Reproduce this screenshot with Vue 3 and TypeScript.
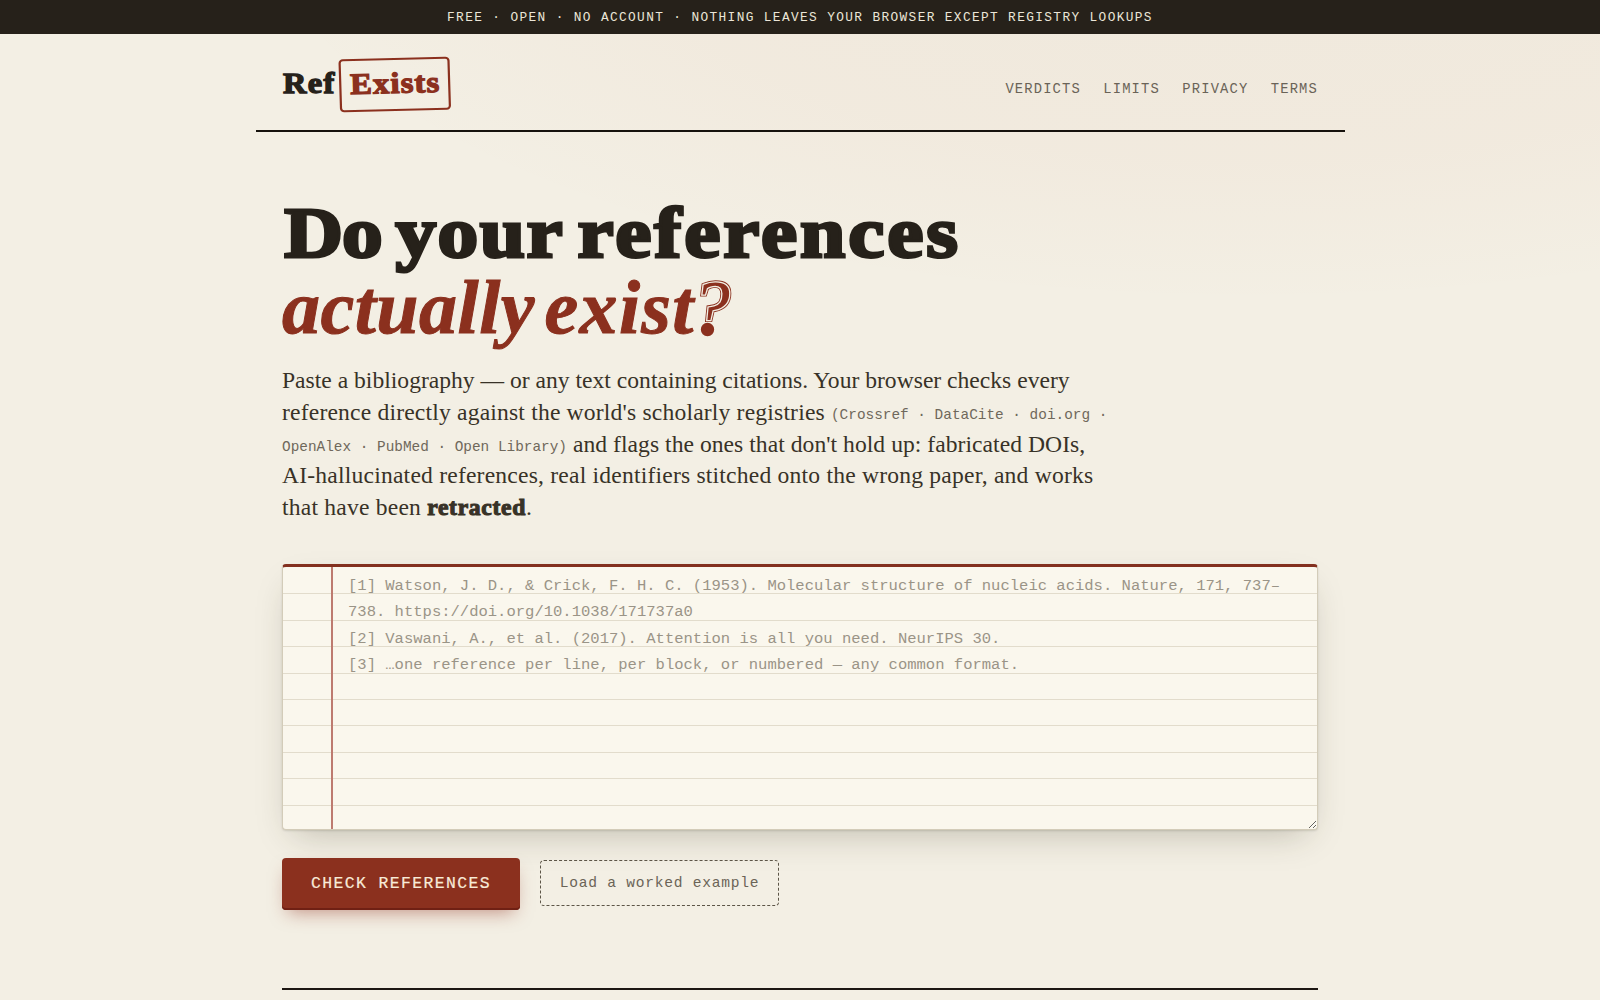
<script setup lang="ts">
import { ref } from 'vue'

interface NavLink {
  label: string
  href: string
}

const links: NavLink[] = [
  { label: 'Verdicts', href: '#verdicts' },
  { label: 'Limits', href: '#limits' },
  { label: 'Privacy', href: '#privacy' },
  { label: 'Terms', href: '#terms' },
]

const example = [
  '[1] Watson, J. D., & Crick, F. H. C. (1953). Molecular structure of nucleic acids. Nature, 171, 737–738. https://doi.org/10.1038/171737a0',
  '[2] Vaswani, A., et al. (2017). Attention is all you need. NeurIPS 30.',
  '[3] …one reference per line, per block, or numbered — any common format.',
].join('\n')

const bibliography = ref('')

function loadExample(): void {
  bibliography.value = example
}
</script>

<template>
  <div class="page">
    <div class="banner">Free · Open · No account · Nothing leaves your browser except registry lookups</div>

    <header class="masthead">
      <a class="logo" href="#"><span class="logo-ref">Ref</span><span class="stamp">Exists</span></a>
      <nav class="nav">
        <a v-for="link in links" :key="link.href" :href="link.href">{{ link.label }}</a>
      </nav>
    </header>

    <main class="main">
      <h1 class="title">
        <span class="title-line"><span class="w-do">Do</span> <span class="w-your">your</span> <span class="w-refs">references</span></span>
        <em class="title-em">actually <span class="w-exist">exist</span><span class="mark">?</span></em>
      </h1>

      <p class="lede">
        <span class="row r1">Paste a bibliography — or any text containing citations. Your browser checks every</span>
        <span class="row r2">reference directly against the world's scholarly registries <small>(Crossref · DataCite · doi.org ·</small></span>
        <span class="row r3"><small>OpenAlex · PubMed · Open Library)</small> and flags the ones that don't hold up: fabricated DOIs,</span>
        <span class="row r4">AI-hallucinated references, real identifiers stitched onto the wrong paper, and works</span>
        <span class="row r5">that have been <strong>retracted</strong>.</span>
      </p>

      <textarea v-model="bibliography" class="sheet" :placeholder="example" spellcheck="false"></textarea>

      <div class="actions">
        <button class="primary" type="button">Check references</button>
        <button class="ghost" type="button" @click="loadExample">Load a worked example</button>
      </div>

      <hr class="rule" />
    </main>
  </div>
</template>

<style>
body {
  margin: 0;
  background: #f3efe4;
}
</style>

<style scoped>
.page {
  height: 1000px;
  overflow: hidden;
  color: #26211a;
  font-family: "Liberation Serif", serif;
  background:
    radial-gradient(1250px 480px at 78% -8%, rgba(143, 70, 28, 0.04), rgba(190, 80, 40, 0.03) 50%, transparent 80%),
    #f3efe4;
}

.banner {
  height: 34px;
  line-height: 35px;
  background: #26211a;
  color: #ece6d8;
  text-align: center;
  text-transform: uppercase;
  white-space: nowrap;
  font-family: "Liberation Mono", monospace;
  font-size: 12.8px;
  letter-spacing: 1.37px;
}

.masthead {
  box-sizing: border-box;
  width: 1089px;
  height: 98px;
  margin: 0 auto;
  padding: 0 26.5px;
  border-bottom: 2px solid #16120d;
  display: flex;
  justify-content: space-between;
  align-items: flex-start;
}

.logo {
  display: flex;
  align-items: baseline;
  margin-top: 24px;
  color: #26211a;
  text-decoration: none;
  font-size: 29.5px;
  font-weight: 700;
  line-height: 46px;
  transform: scaleX(1.1);
  transform-origin: left center;
  -webkit-text-stroke: 1.3px currentColor;
}

.logo-ref {
  margin-left: 1px;
  letter-spacing: 1.2px;
}

.stamp {
  margin-left: 3.5px;
  padding: 0 6.5px 3px 8px;
  border: 2px solid #8b301e;
  border-radius: 4px;
  color: #8b301e;
  letter-spacing: 1.1px;
  transform: rotate(-1.6deg);
}

.nav {
  display: flex;
  gap: 22.4px;
  margin-top: 45.5px;
}

.nav a {
  color: #6a6357;
  text-decoration: none;
  text-transform: uppercase;
  font-family: "Liberation Mono", monospace;
  font-size: 13.8px;
  line-height: 20px;
  letter-spacing: 1.16px;
}

.main {
  width: 1036px;
  margin: 0 auto;
}

.title {
  margin: 0;
  padding-top: 63px;
  font-weight: 700;
  line-height: 76px;
  white-space: nowrap;
}

.title-line,
.title-em {
  display: block;
}

.title-line {
  margin-bottom: -2px;
  padding-left: 2px;
  font-size: 72px;
  word-spacing: -6px;
  transform: scaleX(1.13);
  transform-origin: left center;
  -webkit-text-stroke: 3px currentColor;
}

.w-do {
  letter-spacing: -0.8px;
}

.w-your {
  letter-spacing: 1.3px;
}

.w-refs {
  letter-spacing: 2.6px;
}

.title-em {
  color: #8b301e;
  font-size: 76px;
  letter-spacing: 0.5px;
  word-spacing: -10px;
  -webkit-text-stroke: 1px currentColor;
}

.w-exist {
  letter-spacing: 1.3px;
}

.mark {
  position: relative;
  left: -3px;
  font-weight: 400;
  -webkit-text-stroke: 4.4px #8b301e;
}

.mark::before {
  content: "?";
  position: absolute;
  left: 0;
  top: 0;
  line-height: 84px;
  clip-path: inset(0 -10px 26px -10px);
  -webkit-text-stroke: 2.6px #f3efe4;
  paint-order: stroke fill;
}

.lede {
  margin: 20px 0 0;
  color: #383227;
  font-size: 23.6px;
}

.row {
  display: block;
  height: 31.8px;
  line-height: 31.8px;
  white-space: nowrap;
}

.r2 {
  letter-spacing: 0.18px;
}

.r3 {
  letter-spacing: 0.04px;
}

.r4,
.r5 {
  letter-spacing: 0.2px;
}

.lede small {
  position: relative;
  top: -1px;
  color: #6f685b;
  font-family: "Liberation Mono", monospace;
  font-size: 14.4px;
  letter-spacing: 0;
}

.lede strong {
  letter-spacing: 0.7px;
  -webkit-text-stroke: 1.1px currentColor;
}

.sheet {
  display: block;
  box-sizing: border-box;
  width: 1036px;
  height: 266px;
  margin: 40px 0 0;
  padding: 6px 22px 0 65px;
  border: 1px solid #d3ccb9;
  border-top: 3px solid #83301f;
  border-radius: 4px;
  outline: none;
  resize: vertical;
  color: #26211a;
  font-family: "Liberation Mono", monospace;
  font-size: 15.54px;
  line-height: 26.4px;
  background:
    linear-gradient(90deg, transparent 48px, #bd7b70 48px, #bd7b70 50px, transparent 50px),
    repeating-linear-gradient(180deg, transparent 0, transparent 25.4px, #e2dccc 25.4px, #e2dccc 26.4px) 0 1px,
    #faf7ed;
  box-shadow: 0 1px 2px rgba(50, 45, 25, 0.15), 0 14px 34px -12px rgba(50, 45, 25, 0.28);
}

.sheet::placeholder {
  color: #9a9487;
  opacity: 1;
}

.actions {
  display: flex;
  align-items: flex-start;
  gap: 20px;
  margin-top: 28px;
}

.primary,
.ghost {
  box-sizing: border-box;
  margin: 0;
  border-radius: 4px;
  font-family: "Liberation Mono", monospace;
  white-space: nowrap;
}

.primary {
  width: 238px;
  height: 52px;
  padding: 0;
  border: 0;
  background: #8b301e;
  color: #f8ead8;
  font-size: 16.4px;
  letter-spacing: 1.41px;
  text-transform: uppercase;
  -webkit-text-stroke: 0.2px currentColor;
  box-shadow: inset 0 -2px 0 #702014, 0 8px 18px -6px rgba(143, 47, 31, 0.5);
}

.ghost {
  width: 239px;
  height: 46px;
  margin-top: 2px;
  padding: 0;
  border: 1px dashed #5c5547;
  background: transparent;
  color: #6b6457;
  font-size: 14.6px;
  letter-spacing: 0.75px;
}

.rule {
  height: 2px;
  margin: 78px 0 0;
  border: 0;
  background: #1c1712;
}
</style>
